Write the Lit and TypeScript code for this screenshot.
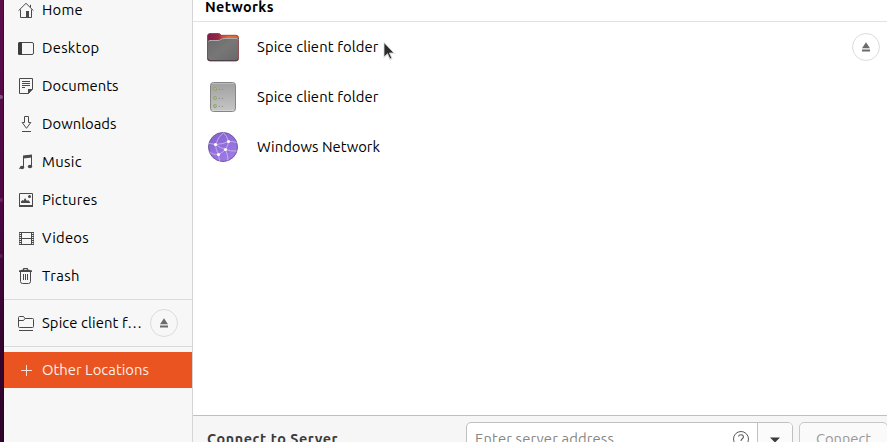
import { LitElement, html, svg, css } from "lit";
import { customElement, property } from "lit/decorators.js";

/** A single line of text whose tracking is adjusted to fill a given width. */
@customElement("fit-label")
class FitLabel extends LitElement {
  @property() text = "";
  @property({ type: Number }) width = 0;

  static styles = css`
    :host { display: block; white-space: nowrap; }
    .text { display: inline-block; white-space: nowrap; }
  `;

  updated() {
    const el = this.renderRoot.querySelector<HTMLElement>(".text");
    if (!el || !this.width) return;
    el.style.letterSpacing = "0px";
    const natural = el.getBoundingClientRect().width;
    el.style.letterSpacing = `${(this.width - natural) / this.text.length}px`;
  }

  render() {
    return html`<span class="text">${this.text}</span>`;
  }
}

const icons: Record<string, unknown> = {
  home: svg`<path d="M0.6 8.6 8 1.3l7.4 7.3M12.5 5.5V2.8M2.5 7.5v8h11v-8" fill="none" stroke="#4a4a4a"/><path d="M8 9h3v6.5H8z" fill="#4a4a4a"/>`,
  desktop: svg`<rect x=".5" y="2.5" width="15" height="12" rx="1.5" fill="none" stroke="#4a4a4a"/><path d="M1.5 2H4v13H1.5Q0 15 0 13.5v-10Q0 2 1.500 2z" fill="#3d3d3d"/>`,
  documents: svg`<path d="M1.5.5h13v10.500l-4 4.500h-9z" fill="none" stroke="#4a4a4a"/><path d="M4 3.500h8M4 5.500h8M4 7.500h8M4 9.500h3" stroke="#4a4a4a"/><path d="M10 11h5l-5 5z" fill="#4a4a4a"/>`,
  downloads: svg`<path d="M6.500.5h4v6h2.300L8.500 12.300 4.200 6.500h2.300zM4 15.500h9" fill="none" stroke="#4a4a4a"/>`,
  music: svg`<path d="M5.500 13V2.500L13.500 1.500V12" fill="none" stroke="#4a4a4a"/><path d="M5 1.500 14 .5v3L5 4.500z" fill="#4a4a4a"/><ellipse cx="4" cy="13.500" rx="2.200" ry="1.800" fill="#4a4a4a"/><ellipse cx="12" cy="12.500" rx="2.200" ry="1.800" fill="#4a4a4a"/><circle cx="1.700" cy="14.500" r=".6" fill="#4a4a4a"/>`,
  pictures: svg`<path d="M1.500 1.500h13V14h-13z" fill="none" stroke="#4a4a4a"/><path d="M1 13h14v2H1zM3 11V9.500l1.500-1.500 1 .7L7 6l2 3 1-1 2 2v1z" fill="#4a4a4a"/><circle cx="11.500" cy="4.500" r="1.500" fill="#4a4a4a"/>`,
  videos: svg`<path d="M3.500 2v13M13.500 2v13M3.500 2.500h10M3.500 8.500h10M3.500 14.500h10" fill="none" stroke="#4a4a4a"/><path d="M2 2v13M15 2v13" stroke="#4a4a4a" stroke-width="2" stroke-dasharray="1 1"/><path d="M1.500 2v13M15.500 2v13" stroke="#4a4a4a" stroke-width=".6"/>`,
  trash: svg`<path d="M1 4V2.500L5 1.500V.500Q5 0 6 0h3q1 0 1 .5v1l4 1V4z" fill="#4a4a4a"/><path d="M6.200 1.500h2.600" stroke="#f7f7f7" stroke-width=".8"/><path d="M2.500 4v9.500q0 2 2 2h6q2 0 2-2V4M5.500 6v6M7.500 6v6M9.500 6v6" fill="none" stroke="#4a4a4a"/>`,
  remote: svg`<path d="M.5 11.500v-9q0-1 1-1h4l1.500 2h7.500q1 0 1 1v7q0 1-1 1h-13q-1 0-1-1zM.5 5.500H5.500L7 3.500" fill="none" stroke="#4a4a4a"/><path d="M1 15.500h14" stroke="#4a4a4a"/>`,
  plus: svg`<path d="M8.500 3v11M3 8.500h11" stroke="#fbe0d6"/>`,
};

const eject = html`<svg class="eject" width="10" height="10" viewBox="0 0 10 10">
  <path d="M5 0.300 9 6.300H1zM1 7.500h8v2H1z" fill="#6a6a6a"/></svg>`;

const places: [string, string, number][] = [
  ["home", "Home", 41],
  ["desktop", "Desktop", 57.5],
  ["documents", "Documents", 76.5],
  ["downloads", "Downloads", 74.5],
  ["music", "Music", 40],
  ["pictures", "Pictures", 55.5],
  ["videos", "Videos", 47],
  ["trash", "Trash", 38],
];

@customElement("place-row")
class PlaceRow extends LitElement {
  @property() icon = "";
  @property() text = "";
  @property({ type: Number }) width = 0;
  @property({ type: Boolean, reflect: true }) selected = false;
  @property({ type: Boolean }) ejectable = false;

  static styles = css`
    :host { display: flex; align-items: center; height: 38px; flex: none; padding: 0 14px; box-sizing: border-box; color: #000; }
    :host([selected]) { height: 36px; background: #e95420; color: #fdeee8; }
    .icon { display: block; flex: none; margin-right: 7px; }
    .label { flex: 1; }
    .round { width: 28px; height: 28px; border: 1px solid #dcdcdc; border-radius: 50%; box-sizing: border-box; display: grid; place-items: center; }
    .eject { display: block; }
  `;

  render() {
    return html`
      <svg class="icon" width="17" height="16" viewBox="0 0 17 16">${icons[this.icon]}</svg>
      <fit-label class="label" .text=${this.text} .width=${this.width}></fit-label>
      ${this.ejectable ? html`<div class="round">${eject}</div>` : ""}
    `;
  }
}

const folderArt = html`<svg class="art" width="32" height="32" viewBox="0 0 32 32">
  <defs>
    <linearGradient id="tab"><stop offset="0" stop-color="#7d1f4a"/><stop offset=".35" stop-color="#9a2547"/><stop offset=".5" stop-color="#d34c34"/><stop offset=".7" stop-color="#ed6a30"/><stop offset="1" stop-color="#e9602c"/></linearGradient>
    <linearGradient id="front" x2="1" y2="1"><stop offset="0" stop-color="#6a6a6a"/><stop offset=".5" stop-color="#777"/><stop offset="1" stop-color="#686868"/></linearGradient>
  </defs>
  <path d="M.5 27.500V5q0-2.500 2.500-2.500h8.500q1.200 0 2 1l1 .8H29q2.500 0 2.500 2.500v20.700q0 2.500-2.500 2.500H3q-2.500 0-2.500-2.500z" fill="url(#tab)" stroke="#6b3442" stroke-opacity=".75"/>
  <path d="M1 27.500V10.500Q1 9 3 9h8q1.500 0 2.500-.8l1.500-.7q.8-.5 2-.5h12q2 0 2 2v18.500q0 2-2 2H3q-2 0-2-2z" fill="url(#front)"/>
  <path d="M1.500 10.500Q1.700 9.500 3 9.500h8q1.500 0 2.500-.8l1.500-.7q.8-.5 2-.5h12q1.500 0 2 1" fill="none" stroke="#aaa"/>
  <path d="M1 27.500q0 2 2 2h26q2 0 2-2" fill="none" stroke="#514048"/>
</svg>`;

const serverArt = html`<svg class="art" width="32" height="32" viewBox="0 0 32 32">
  <defs><linearGradient id="box" x2="0" y2="1"><stop offset="0" stop-color="#a0a0a0"/><stop offset="1" stop-color="#c6c6c6"/></linearGradient></defs>
  <rect x="3.500" y="1.500" width="25" height="29" rx="3" fill="url(#box)" stroke="#858585"/>
  <path d="M5 2.500h22" stroke="#bcbcbc"/><path d="M5 29.500h22" stroke="#d4d4d4"/>
  ${[8, 17, 25].map((y) => svg`<circle cx="8" cy=${y} r="1.600" fill="#a3c65c" stroke="#8d9680" stroke-width=".7"/><circle cx="12.500" cy=${y + 0.3} r=".6" fill="#858585"/><circle cx="15.500" cy=${y + 0.3} r=".6" fill="#858585"/>`)}
</svg>`;

const networkArt = html`<svg class="art" width="32" height="32" viewBox="0 0 32 32">
  <defs>
    <linearGradient id="globe" x1=".2" x2=".8" y2="1"><stop offset="0" stop-color="#8564ce"/><stop offset="1" stop-color="#a17ce9"/></linearGradient>
    <clipPath id="disc"><circle cx="16" cy="16" r="14.500"/></clipPath>
  </defs>
  <circle cx="16" cy="16" r="14.500" fill="url(#globe)" stroke="#6d5a9d"/>
  <g clip-path="url(#disc)" fill="none" stroke="#d5c6f6" stroke-width=".7">
    <path d="M1 12.500Q5 12.500 8.500 13.500Q17 13 21.500 10.500Q26 10 31 12M8.500 13.500Q11 6 17 1M8.500 13.500Q13 17 18.500 18.500Q21.500 14 21.500 10.500Q20 5 16 1M18.500 18.500Q15.500 21.500 11.500 23.500Q8.500 18 8.500 13.500M18.500 18.500Q24 20.500 31 20M11.500 23.500Q12 28 13 31M11.500 23.500Q6 24 2 21M18.500 18.500Q21 24 21 30"/>
  </g>
  <g fill="#fff"><circle cx="8.500" cy="13.500" r="1.600"/><circle cx="21.500" cy="10.500" r="1.600"/><circle cx="18.500" cy="18.500" r="1.600"/><circle cx="11.500" cy="23.500" r="1.600"/></g>
</svg>`;

@customElement("app-root")
class AppRoot extends LitElement {
  static styles = css`
    :host { display: grid; grid-template-columns: 4px 189px 1fr; width: 887px; height: 442px; overflow: hidden; position: relative;
      font: 14.8px/20px Ubuntu, "Noto Sans", sans-serif; color: #000; background: #fff; }
    .wall { background: linear-gradient(90deg, transparent 3px, rgba(25, 0, 20, .45) 3px), linear-gradient(#5c0e49, #4d0743 45%, #37052f 75%, #2e0429); display: flex; flex-direction: column; }
    .spot { width: 3px; height: 4px; background: #86507c; border-radius: 0 2px 2px 0; margin-top: 95px; }
    .spot.mid { background: #692359; margin-top: 99px; }
    .spot.low { background: #5b1d4c; margin-top: 52px; }
    .side { background: #f7f7f7; border-right: 1px solid #d5d5d5; display: flex; flex-direction: column; min-height: 0; overflow: hidden; }
    .places { display: flex; flex-direction: column; margin-top: -9px; }
    .sep { height: 1px; flex: none; background: #dadada; margin: 4px 0; }
    .sep.last { margin-bottom: 5px; }
    .main { display: flex; flex-direction: column; min-width: 0; overflow: hidden; }
    .head { height: 21px; flex: none; border-bottom: 1px solid #e2e2e2; padding-left: 12px; font-size: 14.4px; line-height: 14px; font-weight: 700; color: #000; }
    .row { height: 50px; display: flex; align-items: center; padding: 0 7px 0 14px; flex: none; }
    .art { display: block; flex: none; margin-right: 18px; }
    .name { flex: 1; }
    .round { width: 28px; height: 28px; border: 1px solid #dcdcdc; border-radius: 50%; box-sizing: border-box; display: grid; place-items: center; }
    .eject { display: block; }
    .foot { margin-top: auto; height: 27px; box-sizing: border-box; flex: none; background: #f6f6f6; border-top: 1px solid #bfbfbf; display: flex; align-items: flex-start; padding: 6px 0 0 14px; overflow: hidden; }
    .title { width: 259px; flex: none; font-size: 14.4px; font-weight: 700; color: #3b3b3b; margin-top: 7px; }
    .entry { width: 327px; height: 34px; flex: none; box-sizing: border-box; border: 1px solid #c0c0c0; border-radius: 5px; background: #fff; display: flex; }
    .hint { flex: 1; padding: 6px 0 0 8px; color: #868686; }
    .help { flex: none; margin: 8px 8px 0 0; }
    .drop { width: 35px; flex: none; box-sizing: border-box; border-left: 1px solid #c0c0c0; background: #fbfbfb; border-radius: 0 4px 4px 0; display: flex; justify-content: center; padding-top: 14px; }
    .go { width: 89px; height: 34px; flex: none; box-sizing: border-box; border: 1px solid #c8c8c8; border-radius: 5px; background: #fafafa; margin-left: 6px; padding: 6px 0 0 16px; color: #989898; }
    .pointer { position: absolute; left: 382px; top: 41px; }
  `;

  render() {
    return html`
      <div class="wall"><i class="spot"></i><i class="spot mid"></i><i class="spot low"></i></div>
      <div class="side">
        <div class="places">
          ${places.map(([icon, text, width]) => html`<place-row .icon=${icon} .text=${text} .width=${width}></place-row>`)}
        </div>
        <div class="sep"></div>
        <place-row icon="remote" text="Spice client f…" width="100" ejectable></place-row>
        <div class="sep last"></div>
        <place-row icon="plus" text="Other Locations" width="107" selected></place-row>
      </div>
      <div class="main">
        <div class="head"><fit-label class="cap" text="Networks" width="69"></fit-label></div>
        <div class="row">${folderArt}<fit-label class="name" text="Spice client folder" width="121.500"></fit-label><div class="round">${eject}</div></div>
        <div class="row">${serverArt}<fit-label class="name" text="Spice client folder" width="121.500"></fit-label></div>
        <div class="row">${networkArt}<fit-label class="name" text="Windows Network" width="123"></fit-label></div>
        <div class="foot">
          <fit-label class="title" text="Connect to Server" width="131"></fit-label>
          <div class="entry">
            <fit-label class="hint" text="Enter server address" width="139"></fit-label>
            <svg class="help" width="16" height="16" viewBox="0 0 16 16"><circle cx="8" cy="8" r="7.500" fill="none" stroke="#5a5a5a"/><path d="M5.500 5.500Q5.800 3.800 8 3.800t2.500 2q0 1-1.200 1.900T8 10M8 11.500v1.200" fill="none" stroke="#5a5a5a" stroke-width="1.100"/></svg>
            <div class="drop"><svg width="10" height="6" viewBox="0 0 10 6"><path d="M0 .5h10L5 5.500z" fill="#3b3b3b"/></svg></div>
          </div>
          <div class="go"><fit-label text="Connect" width="55"></fit-label></div>
        </div>
      </div>
      <svg class="pointer" width="16" height="22" viewBox="0 0 16 22">
        <path d="M1.500 1v16.500l3.800-3.300 2.400 5.300 3-1.400-2.300-5.200h4.800z" fill="#c8c8c8" opacity=".6"/>
        <path d="M2 1.500v14.500l3.500-3.300 2.500 5.300 1.800-.9-2.300-5.100h4.500z" fill="#2b2b2b" stroke="#f4f4f4" stroke-width=".7"/>
      </svg>
    `;
  }
}
